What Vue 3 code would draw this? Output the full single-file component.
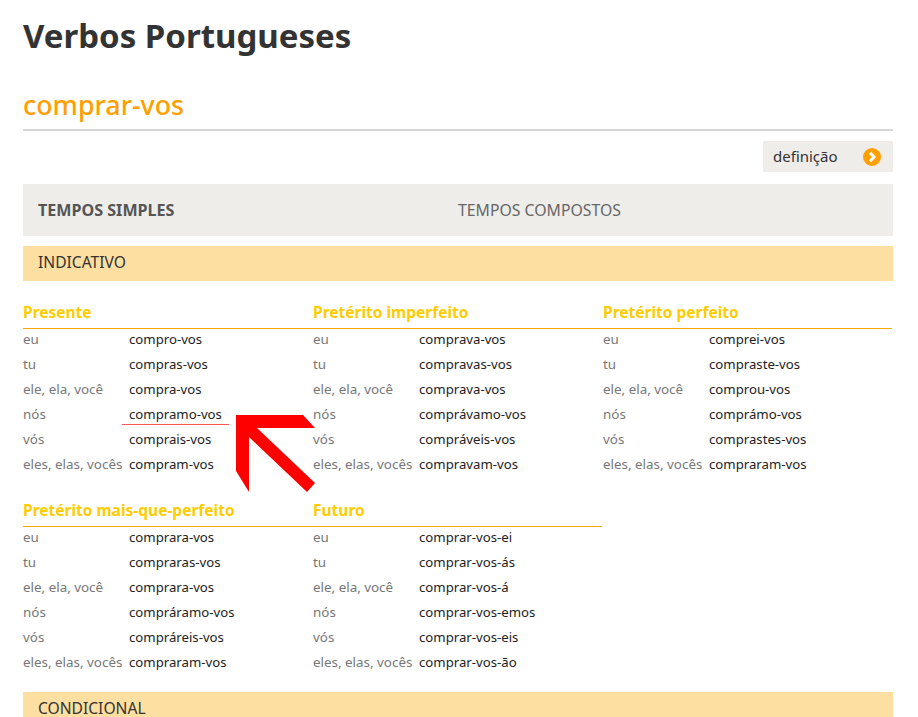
<script setup>
const persons = ['eu', 'tu', 'ele, ela, você', 'nós', 'vós', 'eles, elas, vocês']
const row1 = [
  { title: 'Presente', forms: ['compro-vos', 'compras-vos', 'compra-vos', 'compramo-vos', 'comprais-vos', 'compram-vos'] },
  { title: 'Pretérito imperfeito', forms: ['comprava-vos', 'compravas-vos', 'comprava-vos', 'comprávamo-vos', 'compráveis-vos', 'compravam-vos'] },
  { title: 'Pretérito perfeito', forms: ['comprei-vos', 'compraste-vos', 'comprou-vos', 'comprámo-vos', 'comprastes-vos', 'compraram-vos'] },
]
const row2 = [
  { title: 'Pretérito mais-que-perfeito', forms: ['comprara-vos', 'compraras-vos', 'comprara-vos', 'compráramo-vos', 'compráreis-vos', 'compraram-vos'] },
  { title: 'Futuro', forms: ['comprar-vos-ei', 'comprar-vos-ás', 'comprar-vos-á', 'comprar-vos-emos', 'comprar-vos-eis', 'comprar-vos-ão'] },
]
</script>

<template>
  <div class="page">
    <h1 class="title">Verbos Portugueses</h1>
    <h2 class="verb">comprar-vos</h2>
    <div class="def-row">
      <div class="def">
        <span class="def-label">definição</span>
        <svg class="chev" width="18" height="18" viewBox="0 0 18 18">
          <circle cx="9" cy="9" r="9" fill="#ffa000" />
          <path d="M7 4.8 L11 9 L7 13.2" fill="none" stroke="#fff" stroke-width="3" />
        </svg>
      </div>
    </div>
    <div class="tabs">
      <div class="tab active">TEMPOS SIMPLES</div>
      <div class="tab">TEMPOS COMPOSTOS</div>
    </div>
    <div class="band">INDICATIVO</div>
    <div class="tenses first">
      <section v-for="(t, n) in row1" :key="t.title" class="tense" :class="{ end: n === row1.length - 1 }">
        <h3>{{ t.title }}</h3>
        <div v-for="(f, i) in t.forms" :key="i" class="line">
          <span class="person">{{ persons[i] }}</span>
          <span class="form">{{ f }}</span>
        </div>
      </section>
      <div class="mark"></div>
      <svg class="arrow" width="80" height="78" viewBox="0 0 80 78">
        <path d="M0 0 H67 L79 13 H21 L79 68 L71 77 L13 22 V77 L0 56 Z" fill="#ff0000" />
      </svg>
    </div>
    <div class="tenses second">
      <section v-for="(t, n) in row2" :key="t.title" class="tense" :class="{ end: n === row2.length - 1 }">
        <h3>{{ t.title }}</h3>
        <div v-for="(f, i) in t.forms" :key="i" class="line">
          <span class="person">{{ persons[i] }}</span>
          <span class="form">{{ f }}</span>
        </div>
      </section>
    </div>
    <div class="band cond">CONDICIONAL</div>
  </div>
</template>

<style>
html, body { margin: 0; background: #fff; overflow: hidden; height: 717px; }
</style>

<style scoped>
.page {
  width: 870px;
  padding: 0 25px 0 23px;
  font-family: "Noto Sans", "Open Sans", sans-serif;
  color: #333;
  height: 717px;
  overflow: hidden;
}
.title {
  margin: 0;
  padding-top: 16px;
  font-size: 33px;
  line-height: 40px;
  font-weight: 700;
  color: #333;
}
.verb {
  margin: 33px 0 0;
  font-size: 26.8px;
  line-height: 32px;
  font-weight: 500;
  color: #ffa000;
  padding-bottom: 8px;
  border-bottom: 2px solid #d6d6d6;
}
.def-row { display: flex; justify-content: flex-end; margin-top: 10px; }
.def {
  width: 130px;
  height: 31px;
  box-sizing: border-box;
  padding: 0 12px 0 10px;
  display: flex;
  align-items: center;
  justify-content: space-between;
  background: #eeedea;
  font-size: 15px;
}
.def-label { padding-bottom: 2px; }
.tabs {
  margin-top: 12px;
  height: 52px;
  background: #eeedea;
  display: flex;
  align-items: center;
  font-size: 15.8px;
  color: #666;
}
.tab { padding-left: 15px; width: 405px; }
.tab.active { font-weight: 700; font-size: 16.1px; color: #555; }
.band {
  margin-top: 10px;
  height: 35px;
  box-sizing: border-box;
  padding-left: 15px;
  line-height: 33px;
  background: #fddfa2;
  font-size: 15.6px;
}
.tenses { display: flex; position: relative; }
.first { margin-top: 22px; }
.second { margin-top: 22px; }
.tense { width: 290px; flex: none; }
.tense h3 {
  margin: 0;
  height: 26px;
  line-height: 19px;
  box-sizing: border-box;
  font-size: 15.5px;
  font-weight: 700;
  color: #ffcc00;
  border-bottom: 1px solid #f5a800;
  white-space: nowrap;
}
.tense.end h3 { margin-right: 1px; }
.line { display: flex; height: 25px; line-height: 21px; font-size: 13.2px; }
.person { width: 106px; flex: none; color: #777; white-space: nowrap; font-size: 13.4px; }
.form { color: #222; white-space: nowrap; }
.mark {
  position: absolute;
  left: 99px;
  top: 121px;
  width: 107px;
  height: 1px;
  background: #f55;
}
.arrow { position: absolute; left: 213px; top: 112px; }
.cond { margin-top: 15px; }
</style>
